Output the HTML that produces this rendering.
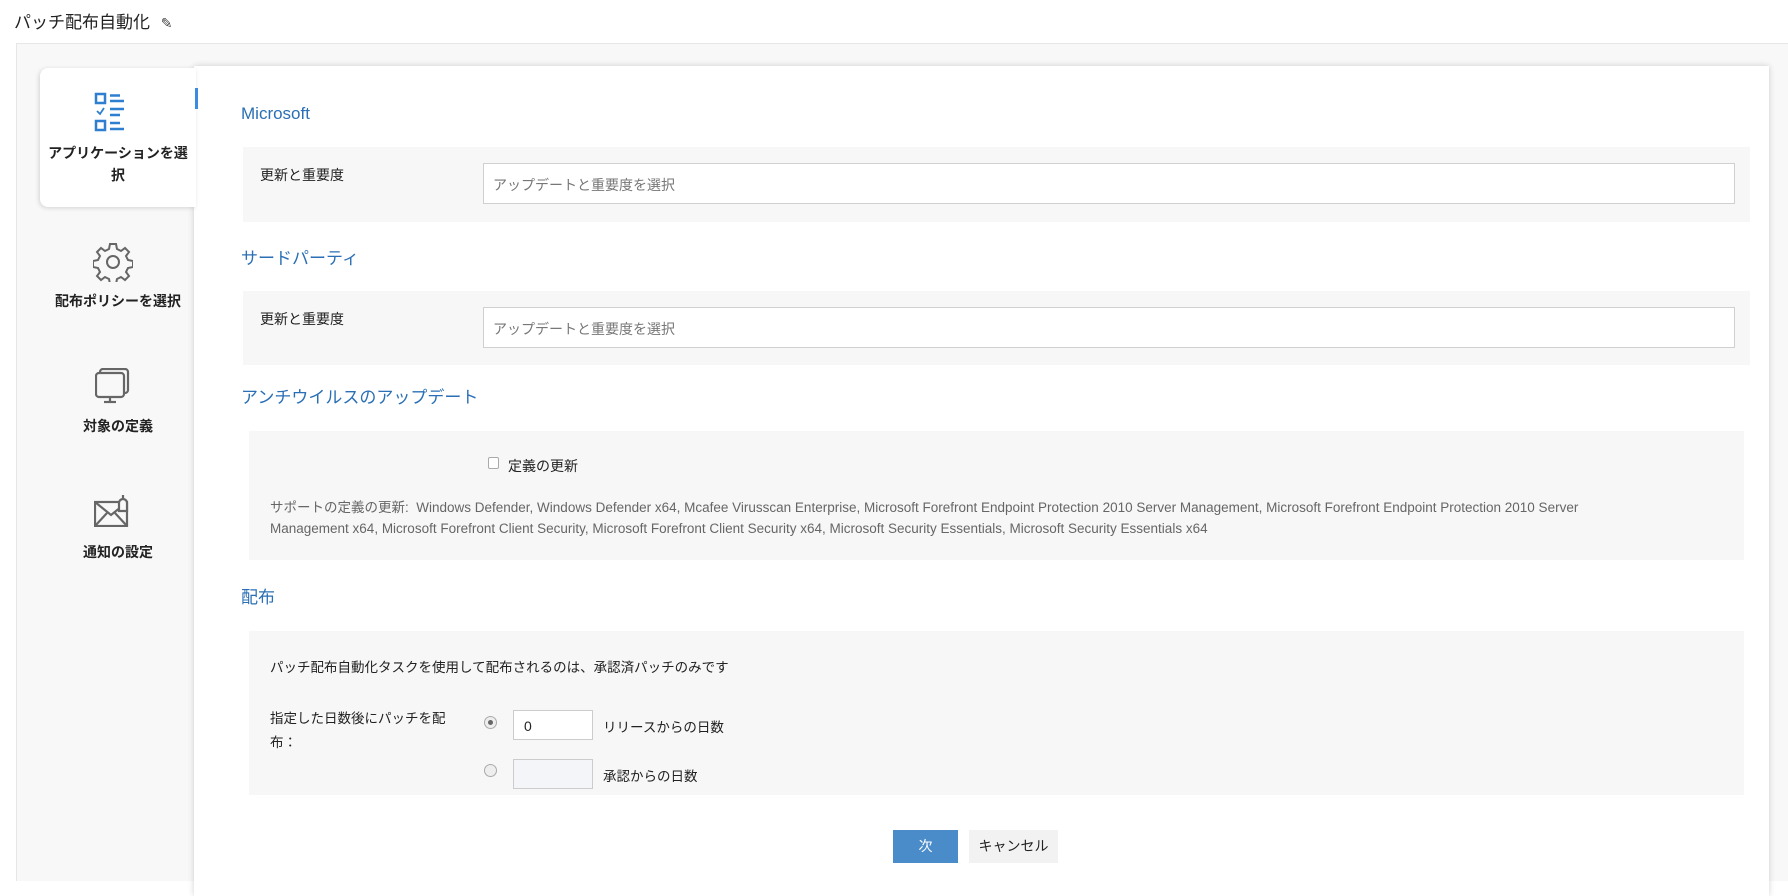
<!DOCTYPE html>
<html><head><meta charset="utf-8"><style>
*{box-sizing:border-box;margin:0;padding:0}
body{width:1788px;height:881px;background:#fff;font-family:"Liberation Sans","Noto Sans CJK JP",sans-serif;position:relative;overflow:hidden;color:#222}
.a{position:absolute}
.title{left:14px;top:8px;font-size:17px;color:#222}
.outer{left:16px;top:43px;width:1772px;height:838px;background:#f8f8f8;border-top:1px solid #e6e6e6;border-left:1px solid #e6e6e6}
.main{left:194px;top:66px;width:1575px;height:830px;background:#fff;box-shadow:0 0 6px rgba(0,0,0,.18)}
.nav{left:40px;top:68px;width:156px;height:139px;background:#fff;border-radius:8px 0 0 8px;box-shadow:-1px 1px 5px rgba(0,0,0,.15)}
.navl{font-size:14px;font-weight:bold;color:#222;text-align:center;width:156px;left:35px;line-height:22px}
.h{font-size:17px;color:#2a6fb5;left:241px}
.box{left:243px;width:1507px;background:#f7f7f7}
.lbl{font-size:14px;color:#222}
.inp{left:483px;width:1252px;height:41px;background:#fff;border:1px solid #d0d0d0;font-size:14px;color:#777;padding:11px 9px}
.sm{font-size:13.5px;color:#666;line-height:21px}
</style></head><body>
<div class="a title">パッチ配布自動化 <span style="font-size:14px;color:#444;margin-left:6px">✎</span></div>
<div class="a outer"></div>
<div class="a main"></div>
<div class="a nav"></div>
<div class="a" style="left:195px;top:88px;width:3px;height:21px;background:#3b8be0"></div>
<svg class="a" style="left:94px;top:92px" width="38" height="40" viewBox="0 0 38 40" fill="none" stroke="#2f7fd0" stroke-width="2.5">
<rect x="2" y="2" width="9" height="9"/><line x1="16" y1="3.5" x2="26" y2="3.5"/><line x1="16" y1="9" x2="30" y2="9"/>
<polyline points="3,19 6,22 10,16" stroke-width="1.8"/><line x1="16" y1="17" x2="30" y2="17"/><line x1="16" y1="23" x2="26" y2="23"/>
<rect x="2" y="29" width="9" height="9"/><line x1="16" y1="31" x2="26" y2="31"/><line x1="16" y1="37" x2="30" y2="37"/>
</svg>
<div class="a navl" style="top:142px;left:40px">アプリケーションを選<br>択</div>
<svg class="a" style="left:93px;top:242px" width="40" height="40" viewBox="0 0 40 40" fill="none" stroke="#666" stroke-width="2">
<path d="M17 2h6l1 5 4 2 4-3 4 4-3 4 2 4 5 1v6l-5 1-2 4 3 4-4 4-4-3-4 2-1 5h-6l-1-5-4-2-4 3-4-4 3-4-2-4-5-1v-6l5-1 2-4-3-4 4-4 4 3 4-2z"/><circle cx="20" cy="20" r="6"/></svg>
<div class="a navl" style="top:290px;left:40px">配布ポリシーを選択</div>
<svg class="a" style="left:95px;top:368px" width="36" height="36" viewBox="0 0 36 36" fill="none" stroke="#666" stroke-width="2.2">
<rect x="5" y="1" width="28" height="24" rx="3"/><rect x="1" y="5" width="28" height="24" rx="3" fill="#f8f8f8"/><line x1="15" y1="29" x2="15" y2="34"/><line x1="9" y1="34" x2="21" y2="34"/></svg>
<div class="a navl" style="top:415px;left:40px">対象の定義</div>
<svg class="a" style="left:94px;top:493px" width="38" height="34" viewBox="0 0 38 34" fill="none" stroke="#666" stroke-width="2.2">
<rect x="1" y="9" width="32" height="24"/><polyline points="1,9 17,22 27,14"/><polyline points="1,33 13,20"/><polyline points="33,33 21,20"/>
<path d="M25 18v-8a4 4 0 0 1 8 0v8z" fill="#f8f8f8"/><line x1="29" y1="2" x2="29" y2="5"/></svg>
<div class="a navl" style="top:541px;left:40px">通知の設定</div>

<div class="a h" style="top:104px">Microsoft</div>
<div class="a box" style="top:147px;height:75px"></div>
<div class="a lbl" style="left:260px;top:165px">更新と重要度</div>
<div class="a inp" style="top:163px">アップデートと重要度を選択</div>
<div class="a h" style="top:244px">サードパーティ</div>
<div class="a box" style="top:291px;height:74px"></div>
<div class="a lbl" style="left:260px;top:309px">更新と重要度</div>
<div class="a inp" style="top:307px">アップデートと重要度を選択</div>
<div class="a h" style="top:383px">アンチウイルスのアップデート</div>
<div class="a box" style="left:249px;width:1495px;top:431px;height:129px"></div>
<div class="a" style="left:488px;top:457px;width:11px;height:12px;border:1px solid #aaa;border-radius:2px;background:#fff"></div>
<div class="a lbl" style="left:508px;top:456px">定義の更新</div>
<div class="a sm" style="left:270px;top:497px;width:1340px">サポートの定義の更新:&nbsp; Windows Defender, Windows Defender x64, Mcafee Virusscan Enterprise, Microsoft Forefront Endpoint Protection 2010 Server Management, Microsoft Forefront Endpoint Protection 2010 Server Management x64, Microsoft Forefront Client Security, Microsoft Forefront Client Security x64, Microsoft Security Essentials, Microsoft Security Essentials x64</div>
<div class="a h" style="top:583px">配布</div>
<div class="a box" style="left:249px;width:1495px;top:631px;height:164px"></div>
<div class="a lbl" style="left:270px;top:656px;font-size:13.5px">パッチ配布自動化タスクを使用して配布されるのは、承認済パッチのみです</div>
<div class="a lbl" style="left:270px;top:707px;font-size:13.5px;line-height:24px">指定した日数後にパッチを配<br>布：</div>
<div class="a" style="left:484px;top:716px;width:13px;height:13px;border:1px solid #aaa;border-radius:50%;background:#eee"><div style="margin:3px;width:5px;height:5px;border-radius:50%;background:#666"></div></div>
<div class="a" style="left:513px;top:710px;width:80px;height:30px;background:#fff;border:1px solid #ccc;font-size:14px;padding:7px 10px">0</div>
<div class="a lbl" style="left:603px;top:716px;font-size:13.5px">リリースからの日数</div>
<div class="a" style="left:484px;top:764px;width:13px;height:13px;border:1px solid #aaa;border-radius:50%;background:#eee"></div>
<div class="a" style="left:513px;top:759px;width:80px;height:30px;background:#f4f5f8;border:1px solid #ccc"></div>
<div class="a lbl" style="left:603px;top:765px;font-size:13.5px">承認からの日数</div>
<div class="a" style="left:893px;top:830px;width:65px;height:33px;background:#4a8bc9;color:#fff;font-size:14px;text-align:center;line-height:33px">次</div>
<div class="a" style="left:969px;top:830px;width:89px;height:33px;background:#f2f2f2;color:#222;font-size:14px;text-align:center;line-height:33px">キャンセル</div>
</body></html>
